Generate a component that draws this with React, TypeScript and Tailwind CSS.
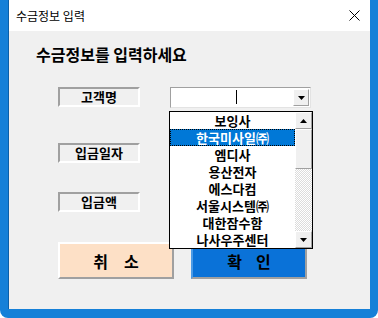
import React from "react";

const companies = [
  "보잉사",
  "한국미사일㈜",
  "엠디사",
  "용산전자",
  "에스다컴",
  "서울시스템㈜",
  "대한잠수함",
  "나사우주센터",
];

const Arrow = ({ up = false }: { up?: boolean }) => (
  <svg width="7" height="4" viewBox="0 0 7 4">
    {up ? <path d="M0 4 L3.5 0 L7 4 Z" fill="#000" /> : <path d="M0 0 L7 0 L3.5 4 Z" fill="#000" />}
  </svg>
);

const ScrollBtn = ({ up = false }: { up?: boolean }) => (
  <div className="w-[17px] h-[17px] flex items-center justify-center bg-[#f0f0f0] border border-t-white border-l-white border-b-[#a0a0a0] border-r-[#a0a0a0]">
    <Arrow up={up} />
  </div>
);

const Label = ({ text }: { text: string }) => (
  <div className="w-[82px] h-[20px] leading-[16px] flex items-center justify-center text-[13px] font-bold text-black border-2 border-t-[#a0a0a0] border-l-[#a0a0a0] border-b-white border-r-white">
    {text}
  </div>
);

export default function App() {
  return (
    <div className="w-[378px] h-[318px] bg-[#1580d8] rounded-b-lg px-[8px] pb-[9px] font-['Noto_Sans_CJK_KR',sans-serif]">
      <div className="w-full h-full flex flex-col bg-[#f0f0f0] border-l border-[#0b5fa8]">
        <div className="h-[31px] bg-white flex items-center justify-between pl-[7px] pr-[10px]">
          <span className="text-[12px] text-black">수금정보 입력</span>
          <svg width="11" height="11" viewBox="0 0 11 11">
            <path d="M0.5 0.5 L10.5 10.5 M10.5 0.5 L0.5 10.5" stroke="#000" strokeWidth="1" />
          </svg>
        </div>

        <div className="flex flex-col pl-[49px]">
          <div className="mt-[13px] -ml-[22px] h-[20px] leading-[20px] text-[16px] font-semibold text-black">
            수금정보를 입력하세요
          </div>

          <div className="mt-[23px] flex items-start gap-[30px]">
            <Label text="고객명" />
            <div className="relative">
              <div className="w-[141px] h-[21px] bg-white border border-t-[#a0a0a0] border-l-[#a0a0a0] border-b-[#e3e3e3] border-r-[#e3e3e3] flex items-center justify-end pr-[1px]">
                <div className="absolute left-[66px] top-[3px] w-px h-[14px] bg-black" />
                <div className="w-[16px] h-[17px] flex items-center justify-center bg-[#f0f0f0] border border-t-white border-l-white border-b-[#a0a0a0] border-r-[#a0a0a0]">
                  <Arrow />
                </div>
              </div>

              <div className="absolute z-10 left-[-1px] top-[24px] w-[144px] h-[138px] bg-white border border-black flex">
                <div className="flex-1 flex flex-col">
                  {companies.map((c, i) => (
                    <div
                      key={c}
                      className={
                        i === 1
                          ? "h-[17px] leading-[15px] flex items-center justify-center text-[13px] font-bold text-white bg-[#0078d7] border border-dotted border-black"
                          : "h-[17px] leading-[17px] flex items-center justify-center text-[13px] font-bold text-black"
                      }
                    >
                      {c}
                    </div>
                  ))}
                </div>
                <div className="w-[17px] flex flex-col">
                  <ScrollBtn up />
                  <div className="h-[40px] bg-[#f0f0f0] border border-t-white border-l-white border-b-[#a0a0a0] border-r-[#a0a0a0]" />
                  <div className="flex-1 bg-[repeating-conic-gradient(#dcdcdc_0_25%,#ffffff_0_50%)] bg-[length:2px_2px]" />
                  <ScrollBtn />
                </div>
              </div>
            </div>
          </div>

          <div className="mt-[35px]">
            <Label text="입금일자" />
          </div>

          <div className="mt-[29px]">
            <Label text="입금액" />
          </div>

          <div className="mt-[30px] flex gap-[17px]">
            <div className="w-[116px] h-[37px] flex items-center justify-center gap-[16px] text-[16px] font-bold text-black bg-[#fde0c6] border-2 border-t-white border-l-white border-b-[#a0a0a0] border-r-[#a0a0a0]">
              <span>취</span>
              <span>소</span>
            </div>
            <div className="w-[116px] h-[37px] flex items-center justify-center gap-[14px] text-[16px] font-bold text-black bg-[#0a72d8] border-2 border-t-[#4a9ae6] border-l-[#4a9ae6] border-b-[#a0a0a0] border-r-[#a0a0a0]">
              <span>확</span>
              <span>인</span>
            </div>
          </div>
        </div>
      </div>
    </div>
  );
}
